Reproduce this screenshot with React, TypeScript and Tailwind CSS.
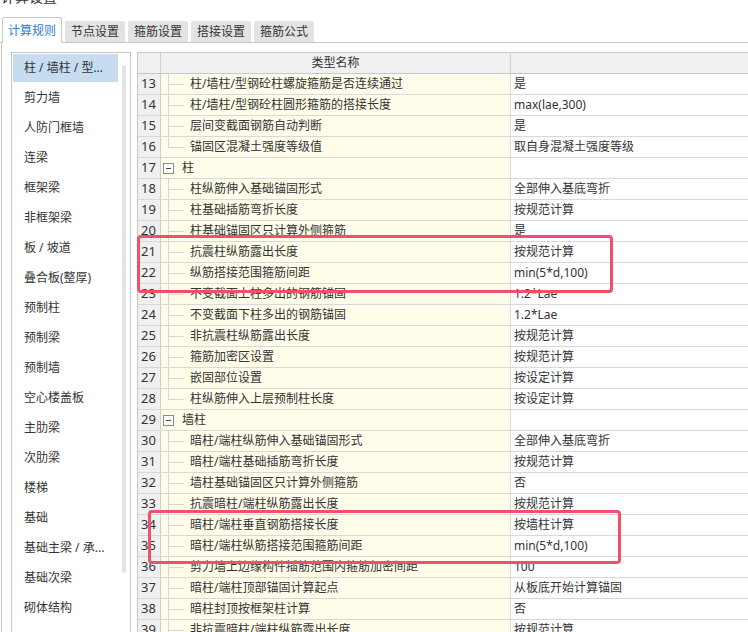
import React from "react";

type Row = [number, string, string, "c" | "l" | "g"];

const rows: Row[] = [
  [13, "柱/墙柱/型钢砼柱螺旋箍筋是否连续通过", "是", "c"],
  [14, "柱/墙柱/型钢砼柱圆形箍筋的搭接长度", "max(lae,300)", "c"],
  [15, "层间变截面钢筋自动判断", "是", "c"],
  [16, "锚固区混凝土强度等级值", "取自身混凝土强度等级", "l"],
  [17, "柱", "", "g"],
  [18, "柱纵筋伸入基础锚固形式", "全部伸入基底弯折", "c"],
  [19, "柱基础插筋弯折长度", "按规范计算", "c"],
  [20, "柱基础锚固区只计算外侧箍筋", "是", "c"],
  [21, "抗震柱纵筋露出长度", "按规范计算", "c"],
  [22, "纵筋搭接范围箍筋间距", "min(5*d,100)", "c"],
  [23, "不变截面上柱多出的钢筋锚固", "1.2*Lae", "c"],
  [24, "不变截面下柱多出的钢筋锚固", "1.2*Lae", "c"],
  [25, "非抗震柱纵筋露出长度", "按规范计算", "c"],
  [26, "箍筋加密区设置", "按规范计算", "c"],
  [27, "嵌固部位设置", "按设定计算", "c"],
  [28, "柱纵筋伸入上层预制柱长度", "按设定计算", "l"],
  [29, "墙柱", "", "g"],
  [30, "暗柱/端柱纵筋伸入基础锚固形式", "全部伸入基底弯折", "c"],
  [31, "暗柱/端柱基础插筋弯折长度", "按规范计算", "c"],
  [32, "墙柱基础锚固区只计算外侧箍筋", "否", "c"],
  [33, "抗震暗柱/端柱纵筋露出长度", "按规范计算", "c"],
  [34, "暗柱/端柱垂直钢筋搭接长度", "按墙柱计算", "c"],
  [35, "暗柱/端柱纵筋搭接范围箍筋间距", "min(5*d,100)", "c"],
  [36, "剪力墙上边缘构件插筋范围内箍筋加密间距", "100", "c"],
  [37, "暗柱/端柱顶部锚固计算起点", "从板底开始计算锚固", "c"],
  [38, "暗柱封顶按框架柱计算", "否", "c"],
  [39, "非抗震暗柱/端柱纵筋露出长度", "按规范计算", "c"],
];

const sideItems = [
  "柱 / 墙柱 / 型...",
  "剪力墙",
  "人防门框墙",
  "连梁",
  "框架梁",
  "非框架梁",
  "板 / 坡道",
  "叠合板(整厚)",
  "预制柱",
  "预制梁",
  "预制墙",
  "空心楼盖板",
  "主肋梁",
  "次肋梁",
  "楼梯",
  "基础",
  "基础主梁 / 承...",
  "基础次梁",
  "砌体结构",
];

const tabs = ["节点设置", "箍筋设置", "搭接设置", "箍筋公式"];

function NameCell({ name, type }: { name: string; type: Row[3] }) {
  if (type === "g") {
    return (
      <div className="relative w-[350px] h-full bg-[#fffdea] border-r border-[#d9d9d9] flex items-center pl-[21px]">
        <div className="absolute left-[2px] top-[5px] w-[11px] h-[11px] border border-[#8a8a8a] bg-white flex items-center justify-center">
          <div className="w-[5px] h-px bg-[#444]" />
        </div>
        <span>{name}</span>
      </div>
    );
  }
  return (
    <div className="relative w-[350px] h-full bg-[#fffdea] border-r border-[#d9d9d9] flex items-center pl-[29px]">
      <div
        className={
          type === "l"
            ? "absolute left-[7px] top-0 h-[10px] w-px bg-[#d6d6d6]"
            : "absolute left-[7px] top-0 h-full w-px bg-[#d6d6d6]"
        }
      />
      <div className="absolute left-[7px] top-[10px] w-[16px] h-px bg-[#d6d6d6]" />
      <span className="whitespace-nowrap">{name}</span>
    </div>
  );
}

export default function App() {
  return (
    <div
      className="w-[748px] h-[632px] overflow-hidden bg-white relative text-[12px] text-[#333]"
      style={{ fontFamily: '"Noto Sans", "Noto Sans CJK SC", sans-serif' }}
    >
      {/* title (cut off) */}
      <div className="h-[17px] overflow-hidden">
        <div className="-mt-[13px] leading-[20px] text-[14px] pl-[1px]">计算设置</div>
      </div>

      {/* tabs */}
      <div className="flex items-end h-[26px] border-b border-[#c8c8c8] pl-[2px] gap-[3px]">
        <div className="h-[26px] w-[60px] -mb-px border border-b-0 border-[#c8c8c8] rounded-t-[3px] bg-white flex items-center justify-center text-[#2b7bd6] text-[12px]">
          计算规则
        </div>
        {tabs.map((t) => (
          <div
            key={t}
            className="h-[21px] w-[60px] rounded-t-[2px] bg-[#e3e3e3] flex items-center justify-center text-[#333]"
          >
            {t}
          </div>
        ))}
      </div>

      {/* body */}
      <div className="flex h-[600px] ml-[1px] border-l border-[#c8c8c8]">
        {/* left list */}
        <div className="mt-[9px] ml-[9px] w-[120px] border border-[#c8c8c8] border-b-0 flex pt-px pl-px">
          <div className="flex-1 flex flex-col gap-[2px]">
            {sideItems.map((s, i) => (
              <div
                key={s}
                className={
                  i === 0
                    ? "h-[28px] flex items-center pl-[11px] bg-[#c5dcf1] whitespace-nowrap"
                    : "h-[28px] flex items-center pl-[11px] whitespace-nowrap"
                }
              >
                {s}
              </div>
            ))}
          </div>
          <div className="w-[12px] flex justify-center pt-[11px]">
            <div className="w-[4px] h-[508px] rounded-full bg-[#e4e4e4]" />
          </div>
        </div>

        {/* table */}
        <div className="mt-[9px] ml-[6px] flex-1 border-l border-t border-[#c8c8c8] flex flex-col">
          <div className="flex h-[21px] border-b border-[#c8c8c8] bg-[#f0f0f0] shrink-0">
            <div className="w-[23px] border-r border-[#d0d0d0]" />
            <div className="w-[350px] border-r border-[#d0d0d0] flex items-center justify-center">
              类型名称
            </div>
            <div className="flex-1" />
          </div>
          {rows.map(([n, name, val, type]) => (
            <div key={n} className="flex h-[21px] border-b border-[#d9d9d9] shrink-0">
              <div className="w-[23px] h-full bg-[#f0f0f0] border-r border-[#d0d0d0] flex items-center pl-[3px] text-[13px] text-[#333]">
                {n}
              </div>
              <NameCell name={name} type={type} />
              <div className="flex-1 h-full bg-white flex items-center pl-[3px] whitespace-nowrap">
                {val}
              </div>
            </div>
          ))}
        </div>
      </div>

      {/* highlight boxes */}
      <div className="absolute left-[137px] top-[235px] w-[476px] h-[58px] border-[3px] border-[#f0506a] rounded-[4px] pointer-events-none" />
      <div className="absolute left-[148px] top-[510px] w-[473px] h-[54px] border-[3px] border-[#f0506a] rounded-[4px] pointer-events-none" />
    </div>
  );
}
